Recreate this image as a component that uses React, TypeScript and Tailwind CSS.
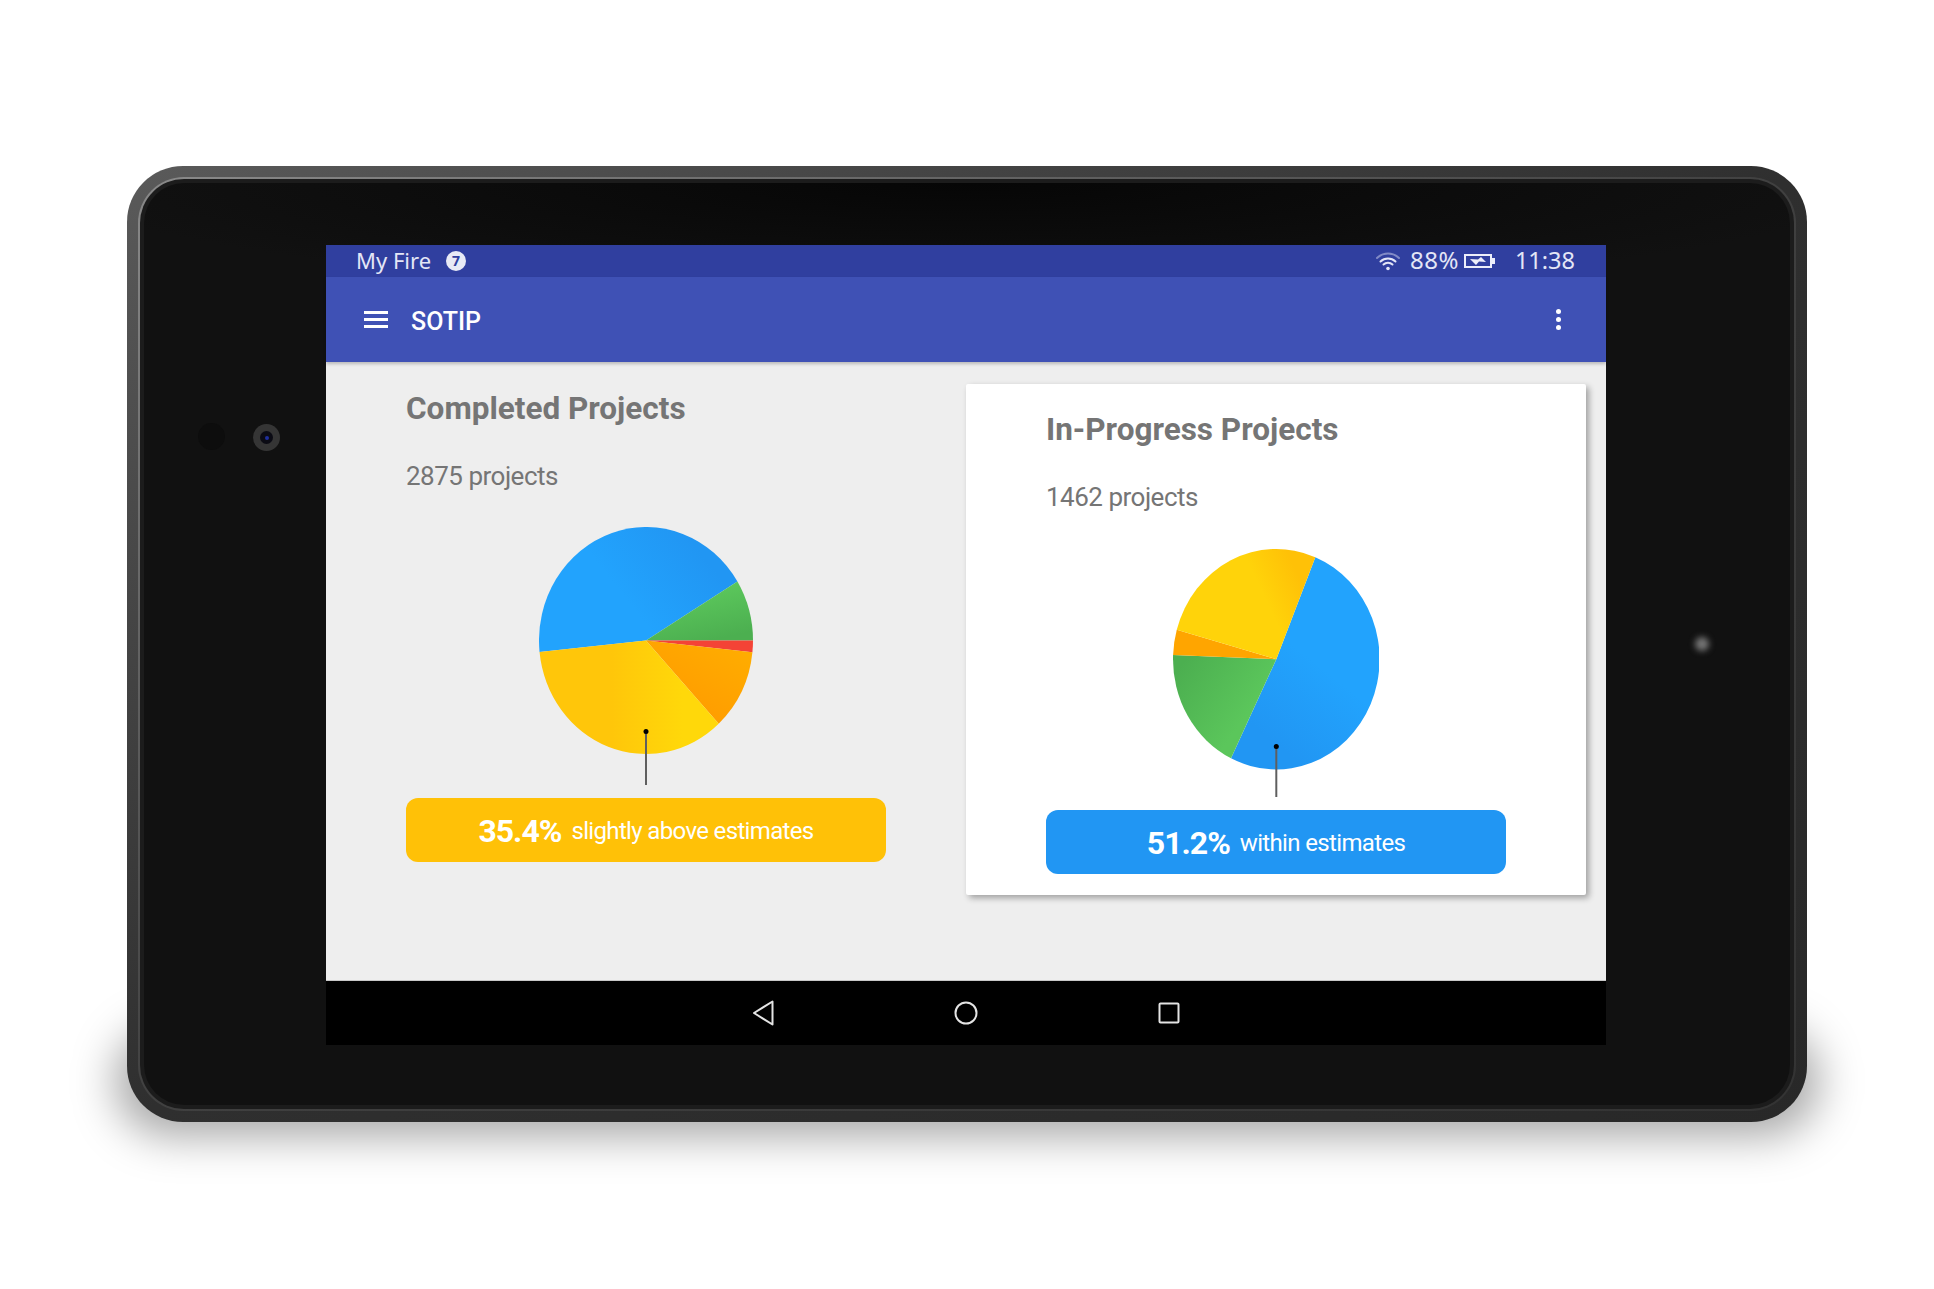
type Slice = { from: number; to: number; fill: string }

const point = (cx: number, cy: number, rx: number, ry: number, deg: number) => {
  const a = (deg * Math.PI) / 180
  return `${(cx + rx * Math.cos(a)).toFixed(2)} ${(cy + ry * Math.sin(a)).toFixed(2)}`
}

function Pie({ rx, ry, height, dotY, slices }: { rx: number; ry: number; height: number; dotY: number; slices: Slice[] }) {
  return (
    <svg width={rx * 2} height={height} className="block mx-auto">
      {slices.map((s) => (
        <path
          key={s.from}
          fill={s.fill}
          d={`M${rx} ${ry} L${point(rx, ry, rx, ry, s.from)} A${rx} ${ry} 0 ${s.to - s.from > 180 ? 1 : 0} 1 ${point(rx, ry, rx, ry, s.to)} Z`}
        />
      ))}
      <line x1={rx} x2={rx} y1={dotY} y2={height} stroke="#5f5f5f" strokeWidth="2" />
      <circle cx={rx} cy={dotY} r="2.5" fill="#000" />
    </svg>
  )
}

function Gradients() {
  return (
    <svg width="0" height="0" className="absolute">
      <defs>
        <linearGradient id="blueA" x1="0" y1="0.7" x2="1" y2="0.2">
          <stop offset="0.4" stopColor="#22a3fd" />
          <stop offset="0.85" stopColor="#2196f3" />
        </linearGradient>
        <linearGradient id="greenA" x1="0.2" y1="0" x2="0.6" y2="1">
          <stop offset="0.2" stopColor="#5cc85c" />
          <stop offset="1" stopColor="#4caf50" />
        </linearGradient>
        <linearGradient id="orangeA" x1="0.9" y1="0" x2="0.3" y2="0.8">
          <stop offset="0" stopColor="#ffae00" />
          <stop offset="1" stopColor="#ff9c00" />
        </linearGradient>
        <linearGradient id="yellowA" x1="0" y1="0.4" x2="1" y2="0.4">
          <stop offset="0.4" stopColor="#ffc60a" />
          <stop offset="0.8" stopColor="#ffd80a" />
        </linearGradient>
        <linearGradient id="blueB" x1="0.7" y1="0.1" x2="0.2" y2="1">
          <stop offset="0.4" stopColor="#22a3fd" />
          <stop offset="0.85" stopColor="#2196f3" />
        </linearGradient>
        <linearGradient id="greenB" x1="0" y1="0" x2="1" y2="0.7">
          <stop offset="0.1" stopColor="#4caf50" />
          <stop offset="0.75" stopColor="#5bc65b" />
        </linearGradient>
        <linearGradient id="yellowB" x1="0.2" y1="0.5" x2="1" y2="0.2">
          <stop offset="0.5" stopColor="#ffd30a" />
          <stop offset="0.85" stopColor="#ffc107" />
        </linearGradient>
      </defs>
    </svg>
  )
}

function Wifi() {
  return (
    <svg width="24" height="19" viewBox="0 0 24 19" fill="none" stroke="#e4e6f6" strokeWidth="2" strokeLinecap="round">
      <path d="M1 6 A15.5 15.5 0 0 1 23 6" opacity="0.45" />
      <path d="M4.5 9.5 A11 11 0 0 1 19.5 9.5" />
      <path d="M7.5 12.5 A6.5 6.5 0 0 1 16.5 12.5" />
      <circle cx="12" cy="16.5" r="1.8" fill="#e4e6f6" stroke="none" />
    </svg>
  )
}

function Battery() {
  return (
    <svg width="31" height="14" viewBox="0 0 31 14" fill="none">
      <rect x="1" y="1" width="26" height="12" stroke="#eceefa" strokeWidth="2" />
      <rect x="28" y="4" width="3" height="6" fill="#eceefa" />
      <path d="M6 5 L14 5.5 L17 3 L22 8 L15 7.5 L12 11 Z" fill="#eceefa" />
    </svg>
  )
}

function StatusBar() {
  return (
    <div className="flex h-[32px] items-center bg-[#303f9f] pl-[30px] pr-[31px] text-[#e4e6f6] font-['Noto_Sans',sans-serif] text-[22px]">
      <span className="mb-[2px] leading-none">My Fire</span>
      <span className="ml-[15px] flex h-[20px] w-[20px] items-center justify-center rounded-full bg-[#e8eaf6] text-[14px] font-bold leading-none text-[#303f9f]">7</span>
      <div className="ml-auto"><Wifi /></div>
      <span className="mb-[2px] ml-[10px] text-[24px] leading-none tracking-[0.5px]">88%</span>
      <div className="ml-[5px]"><Battery /></div>
      <span className="ml-[20px] text-[23.5px] leading-none">11:38</span>
    </div>
  )
}

function Toolbar() {
  return (
    <div className="relative z-10 flex h-[85px] items-center bg-[#3f51b5] pl-[38px] pr-[45px] shadow-[0_2px_3px_rgba(0,0,0,0.22)]">
      <div className="flex w-[24px] flex-col gap-[4px]">
        <div className="h-[3px] bg-white" />
        <div className="h-[3px] bg-white" />
        <div className="h-[3px] bg-white" />
      </div>
      <span className="ml-[23px] mt-[3px] text-[25px] font-medium leading-none text-white">SOTIP</span>
      <div className="ml-auto flex flex-col gap-[3px]">
        <div className="h-[5px] w-[5px] rounded-full bg-white" />
        <div className="h-[5px] w-[5px] rounded-full bg-white" />
        <div className="h-[5px] w-[5px] rounded-full bg-white" />
      </div>
    </div>
  )
}

function NavBar() {
  return (
    <div className="flex h-[65px] items-center justify-center gap-[180px] border-t border-[#c8c8c8] bg-black">
      <svg width="22" height="26" viewBox="0 0 22 26" fill="none" stroke="#e4e4e4" strokeWidth="2" strokeLinejoin="round">
        <path d="M20.5 1.5 V24.5 L2 13 Z" />
      </svg>
      <svg width="24" height="24" viewBox="0 0 24 24" fill="none" stroke="#e4e4e4" strokeWidth="2">
        <circle cx="12" cy="12" r="10.5" />
      </svg>
      <svg width="22" height="22" viewBox="0 0 22 22" fill="none" stroke="#e4e4e4" strokeWidth="2" strokeLinejoin="round">
        <rect x="1.5" y="1.5" width="19" height="19" rx="1" />
      </svg>
    </div>
  )
}

function Screen() {
  return (
    <div className="ml-[182px] mt-[62px] flex h-[800px] w-[1280px] flex-col bg-[#eeeeee] font-['Roboto',sans-serif]">
      <StatusBar />
      <Toolbar />
      <div className="flex h-[618px]">
        <div className="w-[640px] px-[80px] pt-[27px]">
          <h2 className="text-[31.5px] font-bold leading-[40px] text-[#757575]">Completed Projects</h2>
          <p className="mt-[31px] text-[26px] leading-[32px] tracking-[-0.5px] text-[#757575]">2875 projects</p>
          <div className="mt-[35px]">
            <Pie
              rx={107}
              ry={113.5}
              height={258}
              dotY={204.5}
              slices={[
                { from: 174.2, to: 328.7, fill: 'url(#blueA)' },
                { from: 328.7, to: 360, fill: 'url(#greenA)' },
                { from: 0, to: 6, fill: '#f44336' },
                { from: 6, to: 47.2, fill: 'url(#orangeA)' },
                { from: 47.2, to: 174.2, fill: 'url(#yellowA)' },
              ]}
            />
          </div>
          <div className="mt-[13px] flex h-[64px] items-center justify-center gap-[10px] rounded-[12px] bg-[#ffc107] pt-[2px] text-white">
            <span className="text-[32px] font-bold tracking-[-1px]">35.4%</span>
            <span className="text-[24px] tracking-[-0.65px]">slightly above estimates</span>
          </div>
        </div>
        <div className="mt-[22px] h-[511px] w-[620px] rounded-[2px] bg-white px-[80px] pt-[26px] shadow-[3px_3px_6px_rgba(0,0,0,0.33)]">
          <h2 className="text-[31.5px] font-bold leading-[40px] text-[#757575]">In-Progress Projects</h2>
          <p className="mt-[31px] text-[26px] leading-[32px] tracking-[-0.5px] text-[#757575]">1462 projects</p>
          <div className="mt-[36px]">
            <Pie
              rx={103.3}
              ry={110.2}
              height={248}
              dotY={197.4}
              slices={[
                { from: 292.2, to: 476, fill: 'url(#blueB)' },
                { from: 116, to: 182.2, fill: 'url(#greenB)' },
                { from: 182.2, to: 195.5, fill: '#ffa500' },
                { from: 195.5, to: 292.2, fill: 'url(#yellowB)' },
              ]}
            />
          </div>
          <div className="mt-[13px] flex h-[64px] items-center justify-center gap-[10px] rounded-[12px] bg-[#2196f3] pt-[2px] text-white">
            <span className="text-[32px] font-bold tracking-[-1px]">51.2%</span>
            <span className="text-[24px] tracking-[-0.65px]">within estimates</span>
          </div>
        </div>
      </div>
      <NavBar />
    </div>
  )
}

export default function App() {
  return (
    <div className="h-[1289px] overflow-hidden bg-white pl-[127px] pt-[166px]">
      <Gradients />
      <div className="relative h-[956px] w-[1680px]">
        {/* soft floor shadow */}
        <div className="absolute inset-x-[-12px] bottom-[-14px] h-[110px] rounded-[70px] bg-black/35 blur-[22px]" />
        <div className="relative h-full rounded-[56px] bg-gradient-to-br from-[#5a5a5a] via-[#2f2f2f] to-[#282828] p-[11px]">
          <div className="h-full rounded-[46px] bg-gradient-to-br from-[#8a8a8a] via-[#404040] to-[#333333] p-[2px]">
            <div className="h-full rounded-[44px] bg-[#1c1c1c] p-[4px]">
              <div className="relative h-full overflow-hidden rounded-[40px] bg-[radial-gradient(ellipse_55%_12%_at_50%_0%,#060606,#111111)]">
                <div className="absolute left-[54px] top-[240px] h-[27px] w-[27px] rounded-full bg-[#0d0d0d]" />
                <div className="absolute left-[109px] top-[241px] flex h-[27px] w-[27px] items-center justify-center rounded-full bg-[#353535]">
                  <div className="flex h-[13px] w-[13px] items-center justify-center rounded-full bg-[#0b0b14]">
                    <div className="h-[4px] w-[4px] rounded-full bg-[#1e2f9e]" />
                  </div>
                </div>
                <div className="absolute left-[1551px] top-[454px] h-[14px] w-[14px] rounded-full bg-[#777777] blur-[3px]" />
                <Screen />
              </div>
            </div>
          </div>
        </div>
      </div>
    </div>
  )
}
